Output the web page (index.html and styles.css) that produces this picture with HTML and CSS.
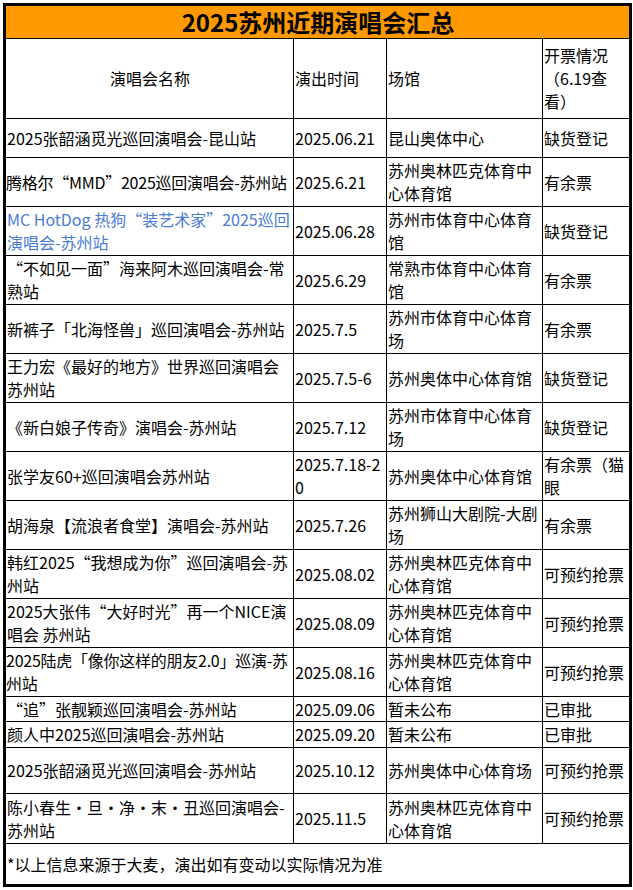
FILE: index.html
```html
<!DOCTYPE html>
<html lang="zh-CN">
<head>
<meta charset="utf-8">
<title>2025苏州近期演唱会汇总</title>
<link rel="stylesheet" href="styles.css">
</head>
<body>
<div class="sheet">
  <div class="c title">2025苏州近期演唱会汇总</div>

  <div class="c center">演唱会名称</div>
  <div class="c">演出时间</div>
  <div class="c">场馆</div>
  <div class="c">开票情况（6.19查看）</div>

  <div class="c">2025张韶涵觅光巡回演唱会-昆山站</div>
  <div class="c">2025.06.21</div>
  <div class="c venue">昆山奥体中心</div>
  <div class="c">缺货登记</div>

  <div class="c tight">腾格尔“MMD”2025巡回演唱会-苏州站</div>
  <div class="c">2025.6.21</div>
  <div class="c venue">苏州奥林匹克体育中心体育馆</div>
  <div class="c">有余票</div>

  <div class="c link">MC HotDog 热狗“装艺术家”2025巡回演唱会-苏州站</div>
  <div class="c">2025.06.28</div>
  <div class="c venue">苏州市体育中心体育馆</div>
  <div class="c">缺货登记</div>

  <div class="c">“不如见一面”海来阿木巡回演唱会-常熟站</div>
  <div class="c">2025.6.29</div>
  <div class="c venue">常熟市体育中心体育馆</div>
  <div class="c">有余票</div>

  <div class="c">新裤子「北海怪兽」巡回演唱会-苏州站</div>
  <div class="c">2025.7.5</div>
  <div class="c venue">苏州市体育中心体育场</div>
  <div class="c">有余票</div>

  <div class="c">王力宏《最好的地方》世界巡回演唱会苏州站</div>
  <div class="c">2025.7.5-6</div>
  <div class="c venue">苏州奥体中心体育馆</div>
  <div class="c">缺货登记</div>

  <div class="c">《新白娘子传奇》演唱会-苏州站</div>
  <div class="c">2025.7.12</div>
  <div class="c venue">苏州市体育中心体育场</div>
  <div class="c">缺货登记</div>

  <div class="c">张学友60+巡回演唱会苏州站</div>
  <div class="c">2025.7.18-20</div>
  <div class="c venue">苏州奥体中心体育馆</div>
  <div class="c">有余票（猫眼</div>

  <div class="c">胡海泉【流浪者食堂】演唱会-苏州站</div>
  <div class="c">2025.7.26</div>
  <div class="c venue">苏州狮山大剧院-大剧场</div>
  <div class="c">有余票</div>

  <div class="c">韩红2025“我想成为你”巡回演唱会-苏州站</div>
  <div class="c">2025.08.02</div>
  <div class="c venue">苏州奥林匹克体育中心体育馆</div>
  <div class="c">可预约抢票</div>

  <div class="c">2025大张伟“大好时光”再一个NICE演唱会 苏州站</div>
  <div class="c">2025.08.09</div>
  <div class="c venue">苏州奥林匹克体育中心体育馆</div>
  <div class="c">可预约抢票</div>

  <div class="c tight">2025陆虎「像你这样的朋友2.0」巡演-苏州站</div>
  <div class="c">2025.08.16</div>
  <div class="c venue">苏州奥林匹克体育中心体育馆</div>
  <div class="c">可预约抢票</div>

  <div class="c">“追”张靓颖巡回演唱会-苏州站</div>
  <div class="c">2025.09.06</div>
  <div class="c venue">暂未公布</div>
  <div class="c">已审批</div>

  <div class="c">颜人中2025巡回演唱会-苏州站</div>
  <div class="c">2025.09.20</div>
  <div class="c venue">暂未公布</div>
  <div class="c">已审批</div>

  <div class="c">2025张韶涵觅光巡回演唱会-苏州站</div>
  <div class="c">2025.10.12</div>
  <div class="c venue">苏州奥体中心体育场</div>
  <div class="c">可预约抢票</div>

  <div class="c">陈小春生・旦・净・末・丑巡回演唱会-苏州站</div>
  <div class="c">2025.11.5</div>
  <div class="c venue">苏州奥林匹克体育中心体育馆</div>
  <div class="c">可预约抢票</div>

  <div class="c note">*以上信息来源于大麦，演出如有变动以实际情况为准</div>
</div>
</body>
</html>
```

FILE: styles.css
```css
html, body {
  margin: 0;
  padding: 0;
  background: #fff;
}

body {
  padding: 3px 0 0 3px;
  font-family: "Noto Sans CJK SC", "Noto Sans", sans-serif;
  font-size: 16px;
  color: #000;
}

.sheet {
  display: grid;
  width: 623px;
  grid-template-columns: 287px 92px 155px 86px;
  grid-template-rows: 32px 79px 38px repeat(11, 48px) 24px 25px 45px 49px 40px;
  gap: 1px;
  background: #000;
  border: 3px solid #000;
}

.c {
  background: #fff;
  display: flex;
  align-items: center;
  padding: 0 0 0 1px;
  line-height: 23px;
  word-break: break-all;
  overflow: hidden;
}

.title {
  grid-column: 1 / -1;
  justify-content: center;
  background: #ff9900;
  font-size: 24px;
  font-weight: 700;
  line-height: 32px;
  overflow: visible;
}

.center {
  justify-content: center;
  text-align: center;
}

.tight {
  padding-left: 0;
  letter-spacing: -0.25px;
}

.venue {
  padding-right: 2px;
}

.link {
  color: #4a7bd3;
}

.note {
  grid-column: 1 / -1;
}
```
